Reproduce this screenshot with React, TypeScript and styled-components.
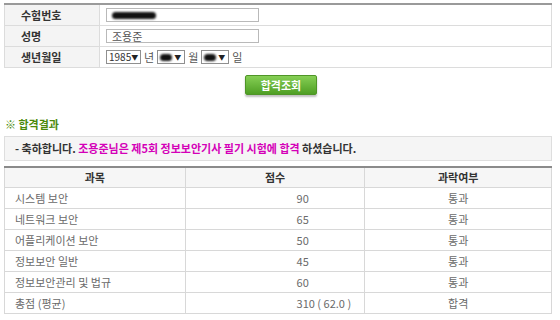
import React from "react";
import styled, { createGlobalStyle } from "styled-components";

const Global = createGlobalStyle`
  html, body { margin: 0; padding: 0; background: #fff; }
  body { font-family: "Noto Sans CJK KR", "Noto Sans", sans-serif; font-size: 11px; line-height: 13px; color: #333; }
`;

const Page = styled.div`
  width: 548px;
  padding: 3px 0 0 4px;
`;

const FormTable = styled.table`
  width: 548px;
  border-collapse: collapse;
  border-top: 2px solid #9a9a9a;
  border-left: 1px solid #dcdcdc;
  border-right: 1px solid #dcdcdc;
`;

const FormRow = styled.tr`
  border-bottom: 1px solid #dcdcdc;
`;

const Label = styled.th`
  width: 78px;
  height: 20px;
  background: #f4f4f4;
  border-right: 1px solid #dcdcdc;
  text-align: left;
  padding: 0 0 0 16px;
  font-weight: bold;
  color: #333;
  font-size: 11px;
`;

const Field = styled.td`
  padding: 0 0 0 6px;
  vertical-align: middle;
`;

const Input = styled.div`
  width: 146px;
  height: 12px;
  border: 1px solid #b9b9b9;
  display: flex;
  align-items: center;
  padding-left: 5px;
  font-size: 11px;
  color: #555;
  line-height: 12px;
`;

const Redact = styled.span<{ $w: number }>`
  display: inline-block;
  width: ${(p) => p.$w}px;
  height: 7px;
  background: #111;
  border-radius: 4px;
  filter: blur(0.8px);
`;

const DateLine = styled.div`
  display: flex;
  align-items: center;
  gap: 3px;
  color: #555;
  line-height: 12px;
`;

const Select = styled.div<{ $w: number }>`
  width: ${(p) => p.$w}px;
  height: 12px;
  border: 1px solid #8f8f8f;
  display: flex;
  align-items: center;
  justify-content: space-between;
  padding: 0 3px 0 2px;
  font-size: 10px;
  color: #333;
`;

const Arrow = styled.span`
  font-size: 7px;
  color: #222;
`;

const ButtonRow = styled.div`
  display: flex;
  justify-content: center;
  padding: 7px 0 0 6px;
`;

const Button = styled.button`
  width: 72px;
  height: 20px;
  border: 1px solid #4f9527;
  border-radius: 2px;
  background: linear-gradient(#86cf55, #4f9f24);
  color: #fff;
  font-family: inherit;
  font-size: 11px;
  font-weight: bold;
  box-shadow: 0 2px 2px rgba(0, 0, 0, 0.25);
  padding: 0;
`;

const Title = styled.div`
  margin-top: 22px;
  padding-left: 1px;
  color: #4b8a0b;
  font-weight: bold;
  font-size: 11px;
  line-height: 14px;
`;

const Message = styled.div`
  margin-top: 5px;
  height: 23px;
  border: 1px solid #dedede;
  background: #f5f5f5;
  display: flex;
  align-items: center;
  padding-left: 10px;
  font-weight: bold;
  color: #333;
  font-size: 11px;
`;

const Pink = styled.span`
  color: #d400b8;
`;

const ResultTable = styled.table`
  margin-top: 5px;
  width: 548px;
  border-collapse: collapse;
  border-top: 2px solid #8a8a8a;
  font-size: 11px;
`;

const Th = styled.th`
  height: 19px;
  background: #f6f6f6;
  border: 1px solid #d8d8d8;
  border-top: none;
  font-weight: bold;
  color: #333;
  text-align: center;
  padding: 0;
`;

const Td = styled.td<{ $align?: string; $pad?: number }>`
  height: 20px;
  border: 1px solid #d8d8d8;
  color: #6a6a6a;
  text-align: ${(p) => p.$align || "left"};
  padding: 0 0 0 ${(p) => p.$pad ?? 0}px;
`;

const rows: [string, string, string][] = [
  ["시스템 보안", "90", "통과"],
  ["네트워크 보안", "65", "통과"],
  ["어플리케이션 보안", "50", "통과"],
  ["정보보안 일반", "45", "통과"],
  ["정보보안관리 및 법규", "60", "통과"],
  ["총점 (평균)", "310 ( 62.0 )", "합격"],
];

export default function App() {
  return (
    <Page>
      <Global />
      <FormTable>
        <tbody>
          <FormRow>
            <Label>수험번호</Label>
            <Field>
              <Input>
                <Redact $w={44} />
              </Input>
            </Field>
          </FormRow>
          <FormRow>
            <Label>성명</Label>
            <Field>
              <Input>조용준</Input>
            </Field>
          </FormRow>
          <FormRow>
            <Label>생년월일</Label>
            <Field>
              <DateLine>
                <Select $w={28}>
                  1985<Arrow>▼</Arrow>
                </Select>
                <span>년</span>
                <Select $w={21}>
                  <Redact $w={12} />
                  <Arrow>▼</Arrow>
                </Select>
                <span>월</span>
                <Select $w={21}>
                  <Redact $w={12} />
                  <Arrow>▼</Arrow>
                </Select>
                <span>일</span>
              </DateLine>
            </Field>
          </FormRow>
        </tbody>
      </FormTable>
      <ButtonRow>
        <Button>합격조회</Button>
      </ButtonRow>
      <Title>※ 합격결과</Title>
      <Message>
        - 축하합니다.&nbsp;<Pink>조용준님은 제5회 정보보안기사 필기 시험에 합격</Pink>&nbsp;하셨습니다.
      </Message>
      <ResultTable>
        <colgroup>
          <col style={{ width: 181 }} />
          <col style={{ width: 180 }} />
          <col style={{ width: 187 }} />
        </colgroup>
        <thead>
          <tr>
            <Th>과목</Th>
            <Th>점수</Th>
            <Th>과락여부</Th>
          </tr>
        </thead>
        <tbody>
          {rows.map(([s, n, r]) => (
            <tr key={s}>
              <Td $pad={10}>{s}</Td>
              <Td $pad={111}>{n}</Td>
              <Td $align="center">{r}</Td>
            </tr>
          ))}
        </tbody>
      </ResultTable>
    </Page>
  );
}
